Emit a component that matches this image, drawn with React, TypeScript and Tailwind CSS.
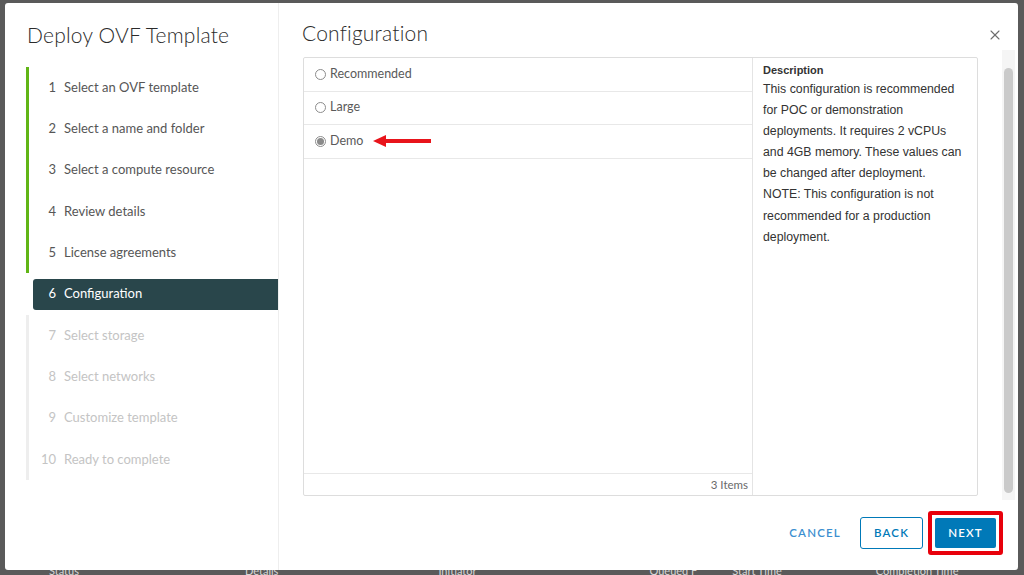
import { X } from 'lucide-react';

const steps = [
  { n: 1, label: 'Select an OVF template', state: 'done' },
  { n: 2, label: 'Select a name and folder', state: 'done' },
  { n: 3, label: 'Select a compute resource', state: 'done' },
  { n: 4, label: 'Review details', state: 'done' },
  { n: 5, label: 'License agreements', state: 'done' },
  { n: 6, label: 'Configuration', state: 'active' },
  { n: 7, label: 'Select storage', state: 'todo' },
  { n: 8, label: 'Select networks', state: 'todo' },
  { n: 9, label: 'Customize template', state: 'todo' },
  { n: 10, label: 'Ready to complete', state: 'todo' },
];

const options = [
  { label: 'Recommended', checked: false },
  { label: 'Large', checked: false },
  { label: 'Demo', checked: true },
];

const description = [
  'This configuration is recommended',
  'for POC or demonstration',
  'deployments. It requires 2 vCPUs',
  'and 4GB memory. These values can',
  'be changed after deployment.',
  'NOTE: This configuration is not',
  'recommended for a production',
  'deployment.',
];

// table header of the page behind the dialog, mostly hidden
const bgHeaders = [
  { label: 'Status', left: 'ml-[49px]' },
  { label: 'Details', left: 'ml-[166px]' },
  { label: 'Initiator', left: 'ml-[160px]' },
  { label: 'Queued F', left: 'ml-[173px]' },
  { label: 'Start Time', left: 'ml-[35px]' },
  { label: 'Completion Time', left: 'ml-[94px]' },
];

function Radio({ checked }: { checked: boolean }) {
  return (
    <span className="w-[11px] h-[11px] rounded-full border border-[#8c8c8c] bg-white flex items-center justify-center">
      {checked && <span className="w-[7px] h-[7px] rounded-full bg-[#8a8a8a]" />}
    </span>
  );
}

function RedArrow() {
  return (
    <svg width="58" height="16" viewBox="0 0 58 16" className="ml-[10px]">
      <polygon points="0,8 13,2 13,14" fill="#e8141b" />
      <rect x="12" y="6" width="46" height="4" fill="#e8141b" />
    </svg>
  );
}

export default function App() {
  return (
    <div
      className="relative w-[1024px] h-[575px] overflow-hidden bg-[#5a5a5a] flex flex-col justify-end"
      style={{ fontFamily: 'Lato, "Liberation Sans", sans-serif' }}
    >
      {/* page behind the modal */}
      <div className="h-[11px] flex items-start text-[11px] leading-[14px] text-[#d6d6d6]">
        {bgHeaders.map((h) => (
          <span key={h.label} className={h.left}>{h.label}</span>
        ))}
      </div>

      {/* modal */}
      <div className="absolute left-[5px] top-[3px] w-[1013px] h-[567px] bg-white rounded-[3px] flex overflow-hidden">
        {/* wizard steps */}
        <div className="w-[274px] shrink-0 flex flex-col border-r border-[#eeeeee]">
          <h1 className="ml-[22px] mt-[18px] h-[28px] text-[21px] leading-[28px] text-[#2b2b2b] font-light tracking-[0.2px]">
            Deploy OVF Template
          </h1>
          <div className="mt-[18px] ml-[21px] flex flex-col">
            {steps.map((s) => (
              <div
                key={s.n}
                className={`h-[41.3px] flex items-center border-l-[3px] ${
                  s.state === 'done' ? 'border-[#60b515]' : s.state === 'active' ? 'border-transparent' : 'border-[#eeeeee]'
                }`}
              >
                <div
                  className={`ml-[4px] flex-1 h-[31px] flex items-center rounded-l-[3px] text-[13px] ${
                    s.state === 'active'
                      ? 'bg-[#29464b] text-white'
                      : s.state === 'done'
                      ? 'text-[#565656]'
                      : 'text-[#c4c4c4]'
                  }`}
                >
                  <span className="w-[23px] text-right">{s.n}</span>
                  <span className="ml-[8px]">{s.label}</span>
                </div>
              </div>
            ))}
          </div>
        </div>

        {/* content */}
        <div className="flex-1 flex flex-col">
          <div className="h-[47px] flex items-start justify-between">
            <h2 className="ml-[23px] mt-[16px] text-[21px] leading-[28px] text-[#2b2b2b] font-light tracking-[0.2px]">
              Configuration
            </h2>
            <X className="mt-[24px] mr-[15px] w-[16px] h-[16px] text-[#6e6e6e]" strokeWidth={1.6} />
          </div>

          <div className="flex items-start">
            <div className="ml-[24px] mt-[7px] w-[675px] h-[439px] border border-[#dddddd] rounded-[2px] flex">
              {/* options list */}
              <div className="w-[449px] flex flex-col border-r border-[#e4e4e4]">
                <div className="flex-1 flex flex-col">
                  {options.map((o) => (
                    <div key={o.label} className="h-[33.5px] flex items-center border-b border-[#e8e8e8] pl-[11px]">
                      <Radio checked={o.checked} />
                      <span className="ml-[4px] text-[12.5px] text-[#5a5a5a]">{o.label}</span>
                      {o.checked && <RedArrow />}
                    </div>
                  ))}
                </div>
                <div className="h-[22px] border-t border-[#e8e8e8] flex items-center justify-end pr-[4px] text-[11.5px] text-[#6a6a6a]">
                  3 Items
                </div>
              </div>

              {/* description */}
              <div className="flex-1 pl-[10px] pt-[3px]" style={{ fontFamily: '"Liberation Sans", Arial, sans-serif' }}>
                <div className="text-[11px] leading-[18px] font-bold text-[#333333]">Description</div>
                {description.map((line) => (
                  <div key={line} className="text-[12.3px] leading-[21.1px] text-[#333333] whitespace-nowrap">{line}</div>
                ))}
              </div>
            </div>

            {/* scrollbar */}
            <div className="ml-[24px] w-[13px] h-[450px] bg-[#f5f5f5] flex justify-center pt-[18px] pb-[7px]">
              <div className="w-[9px] h-full rounded-full bg-[#cacaca]" />
            </div>
          </div>

          <div className="flex-1 flex items-center justify-end pr-[15px] pb-[4px]">
            <button className="mr-[19px] text-[11.5px] font-semibold tracking-[1.2px] text-[#3c8fd0]">CANCEL</button>
            <button className="w-[63px] h-[32px] border border-[#0079b8] rounded-[3px] text-[11.5px] font-semibold tracking-[1.2px] text-[#0079b8]">
              BACK
            </button>
            <div className="ml-[5px] p-[3px] border-[4px] border-[#e8000b] rounded-[3px]">
              <button className="w-[61px] h-[30px] bg-[#0079b8] rounded-[2px] text-[11.5px] font-semibold tracking-[1.2px] text-white">
                NEXT
              </button>
            </div>
          </div>
        </div>
      </div>
    </div>
  );
}
